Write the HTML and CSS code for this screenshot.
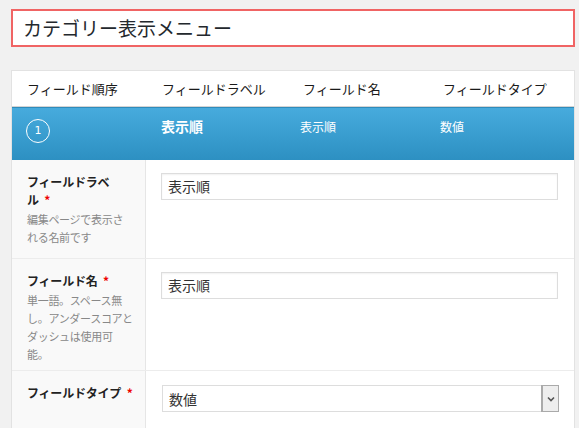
FILE: index.html
```html
<!DOCTYPE html>
<html lang="ja">
<head>
<meta charset="utf-8">
<link rel="stylesheet" href="styles.css">
</head>
<body>
<div class="page">
  <div class="title-box">カテゴリー表示メニュー</div>
  <div class="panel">
    <div class="head-row">
      <div class="hcell">フィールド順序</div>
      <div class="hcell">フィールドラベル</div>
      <div class="hcell">フィールド名</div>
      <div class="hcell">フィールドタイプ</div>
    </div>
    <div class="blue-row">
      <div class="bcell"><span class="num">1</span></div>
      <div class="bcell strong">表示順</div>
      <div class="bcell small">表示順</div>
      <div class="bcell small">数値</div>
    </div>
    <div class="frow r1">
      <div class="lab">
        <div class="lab-title"><span class="ln">フィールドラベ</span><span class="ln">ル <span class="req">*</span></span></div>
        <div class="desc"><span class="ln">編集ページで表示さ</span><span class="ln">れる名前です</span></div>
      </div>
      <div class="val"><div class="input">表示順</div></div>
    </div>
    <div class="frow r2">
      <div class="lab">
        <div class="lab-title"><span class="ln">フィールド名 <span class="req">*</span></span></div>
        <div class="desc"><span class="ln">単一語。スペース無</span><span class="ln">し。アンダースコアと</span><span class="ln">ダッシュは使用可</span><span class="ln">能。</span></div>
      </div>
      <div class="val"><div class="input">表示順</div></div>
    </div>
    <div class="frow r3">
      <div class="lab">
        <div class="lab-title"><span class="ln">フィールドタイプ <span class="req">*</span></span></div>
      </div>
      <div class="val">
        <div class="select"><span class="sel-text">数値</span><span class="arrow"><svg width="8" height="6" viewBox="0 0 8 6"><path d="M1 1.5 L4 4.5 L7 1.5" fill="none" stroke="#555" stroke-width="1.6"/></svg></span></div>
      </div>
    </div>
  </div>
</div>
</body>
</html>
```
FILE: styles.css
```css
html, body {
  margin: 0;
  padding: 0;
  background: #f1f1f1;
  font-family: "Noto Sans CJK JP", "Noto Sans", sans-serif;
  color: #222;
  overflow: hidden;
}
.page {
  padding: 9px 4px 0 11px;
}
.title-box {
  height: 34px;
  border: 2px solid #f06464;
  background: #fff;
  font-size: 19px;
  line-height: 34px;
  padding-left: 10px;
  color: #23282d;
}
.panel {
  margin-top: 23px;
  border: 1px solid #e2e2e2;
  border-bottom: none;
  background: #fff;
}
.head-row {
  display: grid;
  grid-template-columns: 135px 141px 140px 1fr;
  height: 35px;
  border-bottom: 1px solid #d4d4d4;
  align-items: center;
}
.hcell {
  padding-left: 15px;
  font-size: 13px;
  color: #1a1a1a;
}
.blue-row {
  display: grid;
  grid-template-columns: 135px 138px 140px 1fr;
  height: 52px;
  background: linear-gradient(#47abdd, #2d90c2);
  border-top: 1px solid #2f8cbb;
  color: #fff;
}
.bcell {
  padding-left: 15px;
  padding-top: 9px;
  font-size: 12px;
  line-height: 20px;
}
.bcell.strong {
  font-size: 14px;
  font-weight: bold;
  padding-top: 8px;
  padding-left: 14px;
}
.num {
  display: inline-flex;
  align-items: center;
  justify-content: center;
  width: 22px;
  height: 22px;
  border: 1px solid #fff;
  border-radius: 50%;
  font-size: 11px;
  font-family: "DejaVu Sans", sans-serif;
  margin-top: 2px;
  margin-left: -1px;
}
.frow {
  display: grid;
  grid-template-columns: 134px 1fr;
  border-bottom: 1px solid #ececec;
}
.r1 { height: 98px; }
.r2 { height: 111px; }
.r3 { height: 70px; }
.lab {
  background: #f9f9f9;
  border-right: 1px solid #e6e6e6;
  padding: 13px 0 0 15px;
}
.ln {
  display: block;
  white-space: nowrap;
}
.lab-title {
  font-size: 12px;
  letter-spacing: -0.2px;
  font-weight: bold;
  line-height: 18px;
  color: #222;
}
.req {
  color: #e00;
  font-weight: bold;
  margin-left: 3px;
}
.desc {
  font-size: 11px;
  letter-spacing: -0.3px;
  line-height: 18px;
  color: #888;
  margin-top: 1px;
}
.val {
  padding: 13px 16px 0 15px;
}
.input {
  height: 25px;
  border: 1px solid #ddd;
  box-shadow: inset 0 1px 2px rgba(0,0,0,0.06);
  background: #fff;
  font-size: 14px;
  line-height: 25px;
  padding-left: 6px;
  color: #333;
}
.r3 .val { padding-top: 14px; padding-left: 16px; padding-right: 15px; }
.select {
  height: 25px;
  border: 1px solid #ddd;
  background: #fff;
  display: flex;
  align-items: center;
  justify-content: space-between;
  font-size: 14px;
  color: #333;
}
.sel-text { padding-left: 6px; }
.arrow {
  width: 16px;
  height: 25px;
  border-left: 1px solid #aaa;
  background: #eee;
  box-sizing: border-box;
  display: flex;
  align-items: center;
  justify-content: center;
  outline: 1px solid #aaa;
}
```
